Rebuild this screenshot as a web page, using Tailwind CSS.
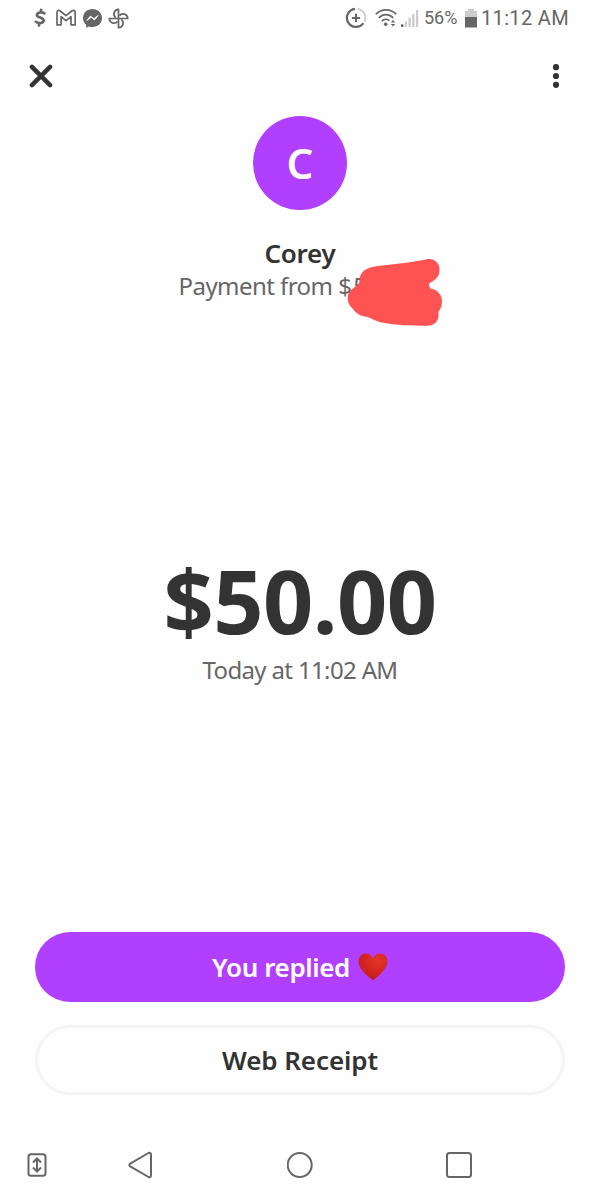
<!DOCTYPE html>
<html lang="en">
<head>
  <meta charset="utf-8">
  <meta name="viewport" content="width=device-width, initial-scale=1.0">
  <title>Payment</title>
  <script src="https://cdn.jsdelivr.net/npm/@tailwindcss/browser@4"></script>
</head>
<body class="bg-[#fefefe]">
  <div class="w-[600px] h-[1200px] overflow-hidden flex flex-col font-['Noto_Sans','Open_Sans',sans-serif] text-[#333333]">

    <!-- status bar -->
    <div class="h-9 shrink-0 flex items-center justify-between pl-8 pr-[29px] text-[#666666] font-['Roboto',sans-serif]">
      <div class="flex items-center">
        <svg class="w-4 h-5" viewBox="0 0 16 20" fill="none" stroke="#666" stroke-width="2.6">
          <path d="M13.3 5.900C10.800 3.700 5.300 3.900 4.900 6.900C4.500 10 11.900 9 11.700 12.600C11.400 15.700 5.800 15.600 3 13.100M9.300 .8L8.700 4M7.400 15L6.800 18.600"/>
        </svg>
        <svg class="w-5 h-[18px] ml-2" viewBox="0 0 20 18" fill="none" stroke="#666" stroke-width="1.7" stroke-linejoin="round">
          <path d="M1 3.2C1 1.3 2.8 1 4.2 2L10 6.7L15.8 2C17.2 1 19.2 1.3 19.2 3.2V15.8H15V7.6L10 11.6L5.1 7.6V15.8H1Z"/>
        </svg>
        <svg class="w-[19px] h-[19px] ml-[7px]" viewBox="0 0 19 19">
          <path d="M9.5 0C4.1 0 0 3.9 0 9C0 11.8 1.2 14.2 3.1 15.8V18.8L6.1 17.4C7.2 17.8 8.3 18 9.5 18C14.9 18 19 14.1 19 9S14.9 0 9.5 0Z" fill="#666"/>
          <path d="M3.8 11.5L7.4 7.1L10.8 9.7L15.2 6.5L11.5 10.9L8.2 8.3Z" fill="#fff" stroke="#fff" stroke-width=".8" stroke-linejoin="round"/>
        </svg>
        <svg class="w-[21px] h-[21px] ml-1.5" viewBox="0 0 21 21" fill="none" stroke="#666" stroke-width="1.7" stroke-linejoin="round">
          <path id="vane" d="M10.500 10.500V1.300A4.600 4.600 0 0 0 7.800 9.600"/>
          <use href="#vane" transform="rotate(90 10.5 10.5)"/>
          <use href="#vane" transform="rotate(180 10.5 10.5)"/>
          <use href="#vane" transform="rotate(270 10.5 10.5)"/>
        </svg>
      </div>
      <div class="flex items-center">
        <svg class="w-[22px] h-[22px]" viewBox="0 0 22 22" fill="none" stroke="#666">
          <path d="M12.5 1.8A9 9 0 0 1 19.6 14.3" stroke="#ccc" stroke-width="1.8"/>
          <path d="M10 1.8A9.1 9.1 0 1 0 18.4 16.2" stroke-width="2.2"/>
          <path d="M11 6.8V15M6.9 10.9H15.1" stroke-width="2"/>
        </svg>
        <svg class="w-[22px] h-5 ml-2" viewBox="0 0 22 20" fill="none" stroke="#666" stroke-width="1.7">
          <path d="M.8 6.2C6.4 .3 15.6 .3 21.2 6.2M3.8 9.8C8 5.6 14 5.6 18.2 9.8M6.8 13.1C9.2 10.7 12.4 10.7 14.4 12.6"/>
          <circle cx="10.7" cy="16.3" r="1.8" fill="#666" stroke="none"/>
          <path d="M15.8 14.4L18 11.9L20.2 14.4ZM15.8 15.9L18 18.4L20.2 15.9Z" fill="#666" stroke="none"/>
        </svg>
        <svg class="w-[18px] h-[18px] ml-1" viewBox="0 0 18 18">
          <path d="M0 15.3H2.4V18H0Z" fill="#666"/>
          <path d="M3.8 12.3H6.1V18H3.8ZM7.5 8.8H9.8V18H7.5ZM11.2 5H13.5V18H11.2ZM14.9 1H17.2V18H14.9Z" fill="#ccc"/>
        </svg>
        <span class="ml-[5px] text-[18px] leading-5 w-[36px] whitespace-nowrap">56%</span>
        <svg class="w-3 h-[19px] ml-[5px]" viewBox="0 0 12 19">
          <path d="M3 0H9V2H12V8H0V2H3Z" fill="#ccc"/>
          <path d="M0 8H12V18.5H0Z" fill="#666"/>
        </svg>
        <span class="ml-[4px] text-[20px] leading-5 w-[90px] whitespace-nowrap tracking-[0.35px]">11:12 AM</span>
      </div>
    </div>

    <!-- toolbar -->
    <div class="h-20 shrink-0 flex items-center justify-between pl-[29px] pr-[40px]">
      <svg class="w-6 h-6" viewBox="0 0 24 24" stroke="#333" stroke-width="4.4" stroke-linecap="round">
        <path d="M2.9 2.9L21.1 21.1M21.1 2.9L2.9 21.1"/>
      </svg>
      <svg class="w-2 h-6" viewBox="0 0 8 24" fill="#333">
        <circle cx="4" cy="3.2" r="3.1"/><circle cx="4" cy="12" r="3.1"/><circle cx="4" cy="20.8" r="3.1"/>
      </svg>
    </div>

    <!-- sender -->
    <div class="flex flex-col items-center">
      <div class="w-[94px] h-[94px] rounded-full bg-[#b13fff] text-white flex items-center justify-center text-[42px] leading-none font-semibold">C</div>
      <div class="mt-[27px] h-8 text-[26px] leading-8 font-semibold whitespace-nowrap tracking-[-0.3px]">Corey</div>
      <div class="relative w-[243px] h-[34px] text-[24px] leading-[34px] text-[#666666] whitespace-nowrap tracking-[-0.55px]">Payment from $<span class="ml-[2px]">5</span>
        <svg class="absolute left-[168px] -top-[11px] w-[96px] h-[68px]" viewBox="347 258 96 68">
          <path d="M376 266.3C393 263.8 411 262.5 426 259.4C434 257.8 440 263 439.5 270.5C439 277 436 279.500 429 283.500C428.500 285.500 430 286.500 430 288.500C437 289 442 294.500 442 301.500C442 306 440.500 309 438.300 312C440 320 435 326 426.500 325.700C412 325.600 396 325.500 382 322.500C375 321 372 318.500 367 316.700C360 316.700 356 313 352.500 308.500C347 304 346 295 350.500 290.500C355 286.500 360 284 359.300 281.500C359.500 272 366 267.700 376 266.300Z" fill="#ff5252"/>
        </svg>
      </div>
    </div>

    <!-- amount -->
    <div class="mt-[244px] flex flex-col items-center whitespace-nowrap">
      <div class="h-[107px] leading-[107px] text-[88px] font-bold tracking-[-0.6px]">$50.00</div>
      <div class="h-8 leading-8 text-[24px] text-[#666666] tracking-[-0.65px]">Today at 11:02 AM</div>
    </div>

    <!-- actions -->
    <div class="mt-auto px-[35px] flex flex-col gap-[23px]">
      <button class="h-[70px] rounded-full bg-[#b13fff] text-white text-[26px] font-semibold flex items-center justify-center gap-2">
        <span class="tracking-[-0.4px]">You replied</span>
        <svg class="w-[30px] h-7" viewBox="0 0 30 28">
          <defs>
            <radialGradient id="heart" cx=".65" cy=".25" r=".8">
              <stop offset="0" stop-color="#e33629"/>
              <stop offset=".6" stop-color="#d12420"/>
              <stop offset="1" stop-color="#b91e24"/>
            </radialGradient>
          </defs>
          <path d="M15 5.300C12.500 -.8 4 -1 1.200 5C-1.700 12 5 19.500 15 27.500C25 19.500 31.700 12 28.800 5C26 -1 17.500 -.8 15 5.300Z" fill="url(#heart)"/>
        </svg>
      </button>
      <button class="h-[70px] rounded-full border-3 border-[#f4f4f4] text-[26px] font-semibold tracking-[-0.1px] pt-px">Web Receipt</button>
    </div>

    <!-- navigation bar -->
    <div class="mt-[35px] h-[70px] shrink-0 flex items-center pl-[27px]">
      <svg class="w-5 h-6" viewBox="0 0 20 24" fill="none" stroke="#666" stroke-width="2">
        <rect x="1.500" y="1.200" width="17" height="21.500" rx="2.500"/>
        <path d="M10 6V18M6 9.500L10 5.500L14 9.500M6 14.500L10 18.500L14 14.500"/>
      </svg>
      <svg class="w-6 h-7 ml-[81px]" viewBox="0 0 24 28" fill="none" stroke="#666" stroke-width="2" stroke-linejoin="round">
        <path d="M2.200 12.600L20.500 2Q23 1 23 4V24Q23 27 20.500 26L2.200 15.400Q.5 14 2.200 12.600Z"/>
      </svg>
      <svg class="w-[26px] h-[26px] ml-[135px]" viewBox="0 0 26 26" fill="none" stroke="#666" stroke-width="2">
        <circle cx="12.700" cy="13" r="12"/>
      </svg>
      <svg class="w-[26px] h-[26px] ml-[133px]" viewBox="0 0 26 26" fill="none" stroke="#666" stroke-width="2">
        <rect x="1" y="1" width="24" height="24" rx="2.500"/>
      </svg>
    </div>
  </div>
</body>
</html>
